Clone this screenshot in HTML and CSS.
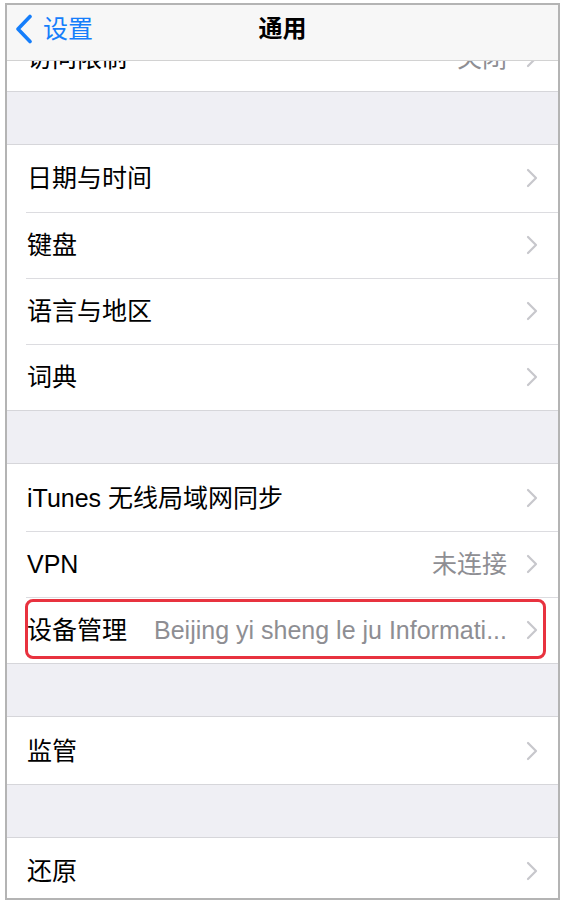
FILE: index.html
```html
<!DOCTYPE html>
<html lang="zh-CN">
<head>
<meta charset="utf-8">
<title>通用</title>
<link rel="stylesheet" href="styles.css">
</head>
<body>
<div class="frame">
  <div class="scroll">
    <div class="group">
      <div class="row"><span class="label">访问限制</span><span class="value">关闭</span><svg class="chev" viewBox="0 0 12 20"><polyline points="2,2 10,10 2,18"/></svg></div>
    </div>
    <div class="gap"></div>
    <div class="group">
      <div class="row"><span class="label">日期与时间</span><span class="spacer"></span><svg class="chev" viewBox="0 0 12 20"><polyline points="2,2 10,10 2,18"/></svg></div>
      <div class="row"><span class="label">键盘</span><span class="spacer"></span><svg class="chev" viewBox="0 0 12 20"><polyline points="2,2 10,10 2,18"/></svg></div>
      <div class="row"><span class="label">语言与地区</span><span class="spacer"></span><svg class="chev" viewBox="0 0 12 20"><polyline points="2,2 10,10 2,18"/></svg></div>
      <div class="row"><span class="label">词典</span><span class="spacer"></span><svg class="chev" viewBox="0 0 12 20"><polyline points="2,2 10,10 2,18"/></svg></div>
    </div>
    <div class="gap"></div>
    <div class="group">
      <div class="row"><span class="label">iTunes 无线局域网同步</span><span class="spacer"></span><svg class="chev" viewBox="0 0 12 20"><polyline points="2,2 10,10 2,18"/></svg></div>
      <div class="row"><span class="label">VPN</span><span class="value">未连接</span><svg class="chev" viewBox="0 0 12 20"><polyline points="2,2 10,10 2,18"/></svg></div>
      <div class="row"><span class="label">设备管理</span><span class="value value-long">Beijing yi sheng le ju Informati...</span><svg class="chev" viewBox="0 0 12 20"><polyline points="2,2 10,10 2,18"/></svg><span class="mark"></span></div>
    </div>
    <div class="gap"></div>
    <div class="group">
      <div class="row"><span class="label">监管</span><span class="spacer"></span><svg class="chev" viewBox="0 0 12 20"><polyline points="2,2 10,10 2,18"/></svg></div>
    </div>
    <div class="gap"></div>
    <div class="group">
      <div class="row"><span class="label">还原</span><span class="spacer"></span><svg class="chev" viewBox="0 0 12 20"><polyline points="2,2 10,10 2,18"/></svg></div>
    </div>
  </div>
  <div class="nav">
    <div class="back">
      <svg class="back-chev" viewBox="0 0 18 30"><polyline points="15,2.5 3,15 15,27.5"/></svg>
      <span>设置</span>
    </div>
    <div class="title">通用</div>
    <div></div>
  </div>
</div>
</body>
</html>
```

FILE: styles.css
```css
html, body {
  margin: 0;
  padding: 0;
  background: #ffffff;
}

body {
  font-family: "Liberation Sans", "Noto Sans CJK SC", sans-serif;
  color: #000;
}

.frame {
  position: relative;
  margin: 3px 4px 0 5px;
  height: 893px;
  border: 2px solid #b4b4b4;
  background: #efeff4;
  overflow: hidden;
}

.scroll {
  padding-top: 20px;
}

.group {
  background: #fff;
  border-top: 1px solid #d6d6da;
  border-bottom: 1px solid #d6d6da;
}

.group:first-child {
  border-top: none;
}

.gap {
  height: 52px;
}

.row {
  position: relative;
  display: flex;
  align-items: center;
  height: 66.3px;
  box-sizing: border-box;
  padding: 0 20px 0 20px;
  font-size: 25px;
  line-height: 30px;
}

.row + .row::before {
  content: "";
  position: absolute;
  top: 0;
  left: 19px;
  right: 0;
  border-top: 1px solid #dcdce0;
}

.label {
  white-space: nowrap;
  flex: none;
}

.spacer {
  flex: 1;
}

.value {
  flex: 1;
  text-align: right;
  color: #8e8e93;
  white-space: nowrap;
  margin-right: 19px;
}

.value-long {
  margin-left: 20px;
}

.chev {
  flex: none;
  width: 12px;
  height: 20px;
}

.chev polyline {
  fill: none;
  stroke: #c7c7cc;
  stroke-width: 2.2;
  stroke-linecap: round;
  stroke-linejoin: round;
}

.mark {
  position: absolute;
  top: 2px;
  bottom: 4px;
  left: 18px;
  right: 12px;
  border: 3px solid #e8323f;
  border-radius: 8px;
}

.nav {
  position: absolute;
  top: 0;
  left: 0;
  right: 0;
  height: 56px;
  box-sizing: border-box;
  padding-bottom: 8px;
  background: #f7f7f7;
  border-bottom: 1px solid #d2d2d2;
  display: grid;
  grid-template-columns: 1fr auto 1fr;
  align-items: center;
  line-height: 30px;
}

.back {
  display: flex;
  align-items: center;
  padding-left: 8px;
  color: #157efb;
  font-size: 25px;
  gap: 10px;
}

.back-chev {
  width: 18px;
  height: 30px;
}

.back-chev polyline {
  fill: none;
  stroke: #157efb;
  stroke-width: 3.6;
  stroke-linecap: round;
  stroke-linejoin: round;
}

.title {
  font-size: 24px;
  font-weight: 700;
}
```
